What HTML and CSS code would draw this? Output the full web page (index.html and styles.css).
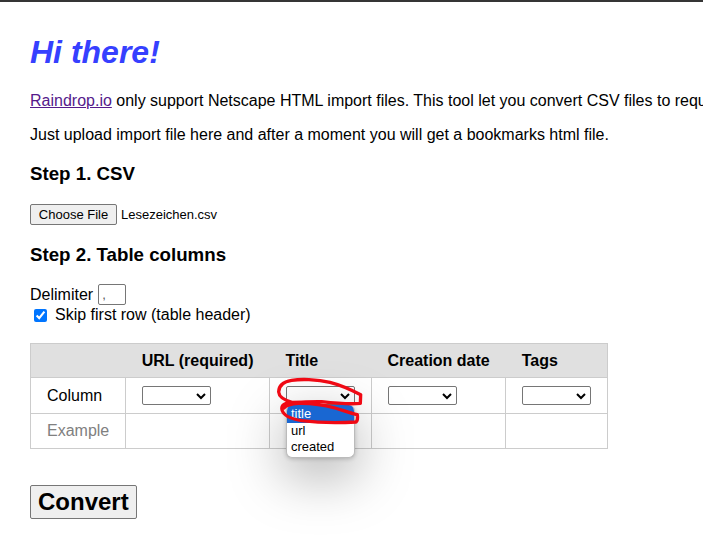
FILE: index.html
```
<!DOCTYPE html>
<html lang="en">
<head>
<meta charset="utf-8">
<title>CSV to bookmarks</title>
<link rel="stylesheet" href="styles.css">
</head>
<body>
<main class="page">
  <h1>Hi there!</h1>
  <p class="intro"><a href="#raindrop">Raindrop.io</a> only support Netscape HTML import files. This tool let you convert CSV files to requ</p>
  <p class="intro">Just upload import file here and after a moment you will get a bookmarks html file.</p>

  <h3>Step 1. CSV</h3>
  <div class="upload">
    <input class="upload-input" type="file" id="file" accept=".csv" aria-label="CSV file">
    <label class="upload-name" for="file">Lesezeichen.csv</label>
  </div>

  <h3>Step 2. Table columns</h3>
  <div class="field">
    <label for="delimiter">Delimiter</label>
    <input class="delimiter" type="text" id="delimiter" value=",">
  </div>
  <div class="check">
    <input type="checkbox" id="skip" checked>
    <label for="skip">Skip first row (table header)</label>
  </div>

  <table>
    <thead>
      <tr><th></th><th>URL (required)</th><th>Title</th><th>Creation date</th><th>Tags</th></tr>
    </thead>
    <tbody>
      <tr>
        <td>Column</td>
        <td><div class="picker"><select aria-label="URL column"><option></option></select><svg class="chevron" viewBox="0 0 10 7"><path d="M1 1 5 5l4-4"/></svg></div></td>
        <td>
          <div class="picker">
            <select aria-label="Title column"><option></option></select>
            <svg class="chevron" viewBox="0 0 10 7"><path d="M1 1 5 5l4-4"/></svg>
            <ul class="menu">
              <li class="active">title</li>
              <li>url</li>
              <li>created</li>
            </ul>
            <svg class="marks" viewBox="0 0 270 165">
              <path d="M272 74C245 60 215 46 180 37C140 27 90 27 65 31C40 35 26 48 26 66C27 82 42 90 66 97C100 97 125 94 155 95C190 99 235 104 271 100L272 74"/>
              <path d="M64 98C42 99 33 107 36 120C40 136 65 147 95 152C150 159 210 159 258 156C264 150 263 140 262 134C240 130 220 121 195 114C155 103 120 99 85 100C60 102 48 106 42 114"/>
            </svg>
          </div>
        </td>
        <td><div class="picker"><select aria-label="Creation date column"><option></option></select><svg class="chevron" viewBox="0 0 10 7"><path d="M1 1 5 5l4-4"/></svg></div></td>
        <td><div class="picker"><select aria-label="Tags column"><option></option></select><svg class="chevron" viewBox="0 0 10 7"><path d="M1 1 5 5l4-4"/></svg></div></td>
      </tr>
      <tr class="example"><td>Example</td><td></td><td></td><td></td><td></td></tr>
    </tbody>
  </table>

  <button class="convert" type="button">Convert</button>
</main>
</body>
</html>
```
FILE: styles.css
```
* { box-sizing: border-box; }

body {
  margin: 0;
  border-top: 2px solid #353535;
  background: #fff;
  color: #000;
  font: 16px/18px "Liberation Sans", Arial, sans-serif;
  overflow: hidden;
}

.page { padding: 32px 30px; }

h1 {
  margin: 0 0 22px;
  color: #3640ff;
  font-size: 32px;
  line-height: 36px;
  font-style: italic;
}

.intro { margin: 0 0 16px; white-space: nowrap; }
.intro a { color: #551a8b; }

h3 { margin: 19px 0; line-height: 22px; }

.upload {
  display: flex;
  align-items: center;
  gap: 4px;
  font-size: 13px;
}

.upload-input {
  width: 87px;
  height: 21px;
  overflow: hidden;
  font: 13px/15px "Liberation Sans", Arial, sans-serif;
}

.upload-input::file-selector-button {
  width: 87px;
  height: 21px;
  margin: 0;
  padding: 0;
  border: 1px solid #767676;
  border-radius: 2px;
  background: #efefef;
  color: #000;
  font: inherit;
}

.field { display: flex; align-items: center; gap: 5px; height: 19px; }

.delimiter {
  width: 28px;
  height: 21px;
  padding: 1px 3px;
  border: 1px solid #767676;
  border-radius: 2px;
  color: #555;
  font: 13px "Liberation Sans", Arial, sans-serif;
}

.check { display: flex; align-items: center; gap: 8px; height: 22px; padding-left: 4px; }
.check input { width: 13px; height: 13px; margin: 0; accent-color: #0075ff; }

table { margin: 17px 0 36px; border-collapse: collapse; border: 1px solid #ccc; }
th { padding: 8px 16px 7px; background: #e0e0e0; text-align: left; }
td { padding: 8px 16px; border: 1px solid #ccc; }
.example { color: #808080; }

.picker { position: relative; width: 69px; }

select {
  display: block;
  width: 69px;
  height: 19px;
  appearance: none;
  border: 1px solid #767676;
  border-radius: 2px;
  background: #fff;
}

.chevron {
  position: absolute;
  top: 7px;
  right: 5px;
  width: 10px;
  height: 7px;
  fill: none;
  stroke: #000;
  stroke-width: 2;
}

.menu {
  position: absolute;
  z-index: 1;
  top: 19px;
  left: 0;
  width: 69px;
  margin: 0;
  padding: 0 0 2px;
  overflow: hidden;
  border: 1px solid #bbb;
  border-top: 0;
  border-radius: 6px;
  background: #fff;
  box-shadow: 0 16px 56px rgba(0, 0, 0, 0.36), 0 1px 4px rgba(0, 0, 0, 0.2);
  list-style: none;
  font-size: 13px;
  line-height: 16px;
}

.menu li { padding: 0 4px; }
.menu .active { padding-top: 1px; padding-bottom: 1px; background: #1967d2; color: #fff; }

.marks {
  position: absolute;
  z-index: 2;
  top: -16px;
  left: -16px;
  width: 90px;
  height: 55px;
  overflow: visible;
  fill: none;
  stroke: #f00914;
  stroke-width: 10;
  stroke-linecap: round;
  stroke-linejoin: round;
}

.convert {
  display: block;
  height: 34px;
  padding: 0 7px;
  border: 1px solid #767676;
  border-radius: 2px;
  background: #efefef;
  color: #000;
  font: bold 24px/28px "Liberation Sans", Arial, sans-serif;
}
```
